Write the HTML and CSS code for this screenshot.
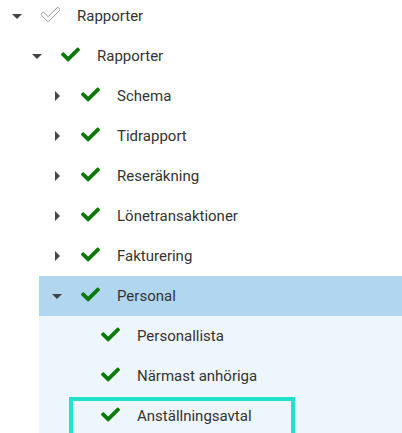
FILE: index.html
```html
<!DOCTYPE html>
<html lang="sv">
<head>
<meta charset="utf-8">
<title>Rapporter</title>
<link rel="stylesheet" href="styles.css">
</head>
<body>
<ul class="tree root">
  <li>
    <div class="row">
      <span class="caret down"></span>
      <span class="icon"><svg class="chk outline" viewBox="0 0 512 512"><path d="M173.898 439.404l-166.4-166.4c-9.997-9.997-9.997-26.206 0-36.204l36.203-36.204c9.997-9.998 26.207-9.998 36.204 0L192 312.69 432.095 72.596c9.997-9.997 26.207-9.997 36.204 0l36.203 36.204c9.997 9.997 9.997 26.206 0 36.204l-294.4 294.401c-9.998 9.997-26.207 9.997-36.204-.001z"/></svg></span>
      <span class="label">Rapporter</span>
    </div>
    <ul class="tree">
      <li>
        <div class="row">
          <span class="caret down"></span>
          <span class="icon"><svg class="chk" viewBox="0 0 512 512"><use href="#c"/></svg></span>
          <span class="label">Rapporter</span>
        </div>
        <ul class="tree">
          <li><div class="row"><span class="caret right"></span><span class="icon"><svg class="chk" viewBox="0 0 512 512"><use href="#c"/></svg></span><span class="label">Schema</span></div></li>
          <li><div class="row"><span class="caret right"></span><span class="icon"><svg class="chk" viewBox="0 0 512 512"><use href="#c"/></svg></span><span class="label">Tidrapport</span></div></li>
          <li><div class="row"><span class="caret right"></span><span class="icon"><svg class="chk" viewBox="0 0 512 512"><use href="#c"/></svg></span><span class="label">Reseräkning</span></div></li>
          <li><div class="row"><span class="caret right"></span><span class="icon"><svg class="chk" viewBox="0 0 512 512"><use href="#c"/></svg></span><span class="label">Lönetransaktioner</span></div></li>
          <li><div class="row"><span class="caret right"></span><span class="icon"><svg class="chk" viewBox="0 0 512 512"><use href="#c"/></svg></span><span class="label">Fakturering</span></div></li>
          <li class="branch">
            <div class="row selected"><span class="caret down"></span><span class="icon"><svg class="chk" viewBox="0 0 512 512"><use href="#c"/></svg></span><span class="label">Personal</span></div>
            <ul class="tree">
              <li><div class="row"><span class="caret"></span><span class="icon"><svg class="chk" viewBox="0 0 512 512"><use href="#c"/></svg></span><span class="label">Personallista</span></div></li>
              <li><div class="row"><span class="caret"></span><span class="icon"><svg class="chk" viewBox="0 0 512 512"><use href="#c"/></svg></span><span class="label">Närmast anhöriga</span></div></li>
              <li><div class="row focused"><span class="caret"></span><span class="icon"><svg class="chk" viewBox="0 0 512 512"><use href="#c"/></svg></span><span class="label">Anställningsavtal</span></div></li>
            </ul>
          </li>
        </ul>
      </li>
    </ul>
  </li>
</ul>
<svg class="defs" width="0" height="0"><defs><path id="c" d="M173.898 439.404l-166.4-166.4c-9.997-9.997-9.997-26.206 0-36.204l36.203-36.204c9.997-9.998 26.207-9.998 36.204 0L192 312.69 432.095 72.596c9.997-9.997 26.207-9.997 36.204 0l36.203 36.204c9.997 9.997 9.997 26.206 0 36.204l-294.4 294.401c-9.998 9.997-26.207 9.997-36.204-.001z"/></defs></svg>
</body>
</html>
```
FILE: styles.css
```css
html, body {
  margin: 0;
  padding: 0;
  background: #ffffff;
  overflow: hidden;
}
body {
  font-family: Roboto, "Liberation Sans", sans-serif;
  font-size: 15px;
  color: #333333;
}
.defs {
  position: absolute;
  width: 0;
  height: 0;
}
.tree {
  list-style: none;
  margin: 0;
  padding: 0 0 0 20px;
}
.tree.root {
  padding-left: 0;
  margin-top: -4px;
}
.row {
  position: relative;
  display: flex;
  align-items: center;
  height: 40px;
  padding-left: 5px;
}
.caret {
  width: 24px;
  height: 10px;
  margin-right: 12px;
  display: flex;
  align-items: center;
  justify-content: center;
  flex: none;
}
.caret.down::before {
  content: "";
  border-left: 5px solid transparent;
  border-right: 5px solid transparent;
  border-top: 5px solid #444444;
}
.caret.right::before {
  content: "";
  border-top: 5px solid transparent;
  border-bottom: 5px solid transparent;
  border-left: 5px solid #444444;
}
.icon {
  width: 36px;
  flex: none;
  display: flex;
  align-items: center;
}
.chk {
  width: 19px;
  height: 19px;
  fill: #0b7a0b;
  margin-bottom: 3px;
}
.chk.outline {
  fill: none;
  stroke: #777777;
  stroke-width: 20;
  margin-bottom: 4px;
}
.label {
  white-space: nowrap;
}
.branch {
  margin-left: -1px;
  padding-left: 1px;
  background: #eef6fd;
}
.row.selected {
  background: #b1d6f0;
  margin-left: -1px;
  padding-left: 6px;
}
.row.focused::after {
  content: "";
  position: absolute;
  left: 9px;
  top: 1px;
  width: 218px;
  height: 32px;
  border: 4px solid #1fe3cc;
}
```
